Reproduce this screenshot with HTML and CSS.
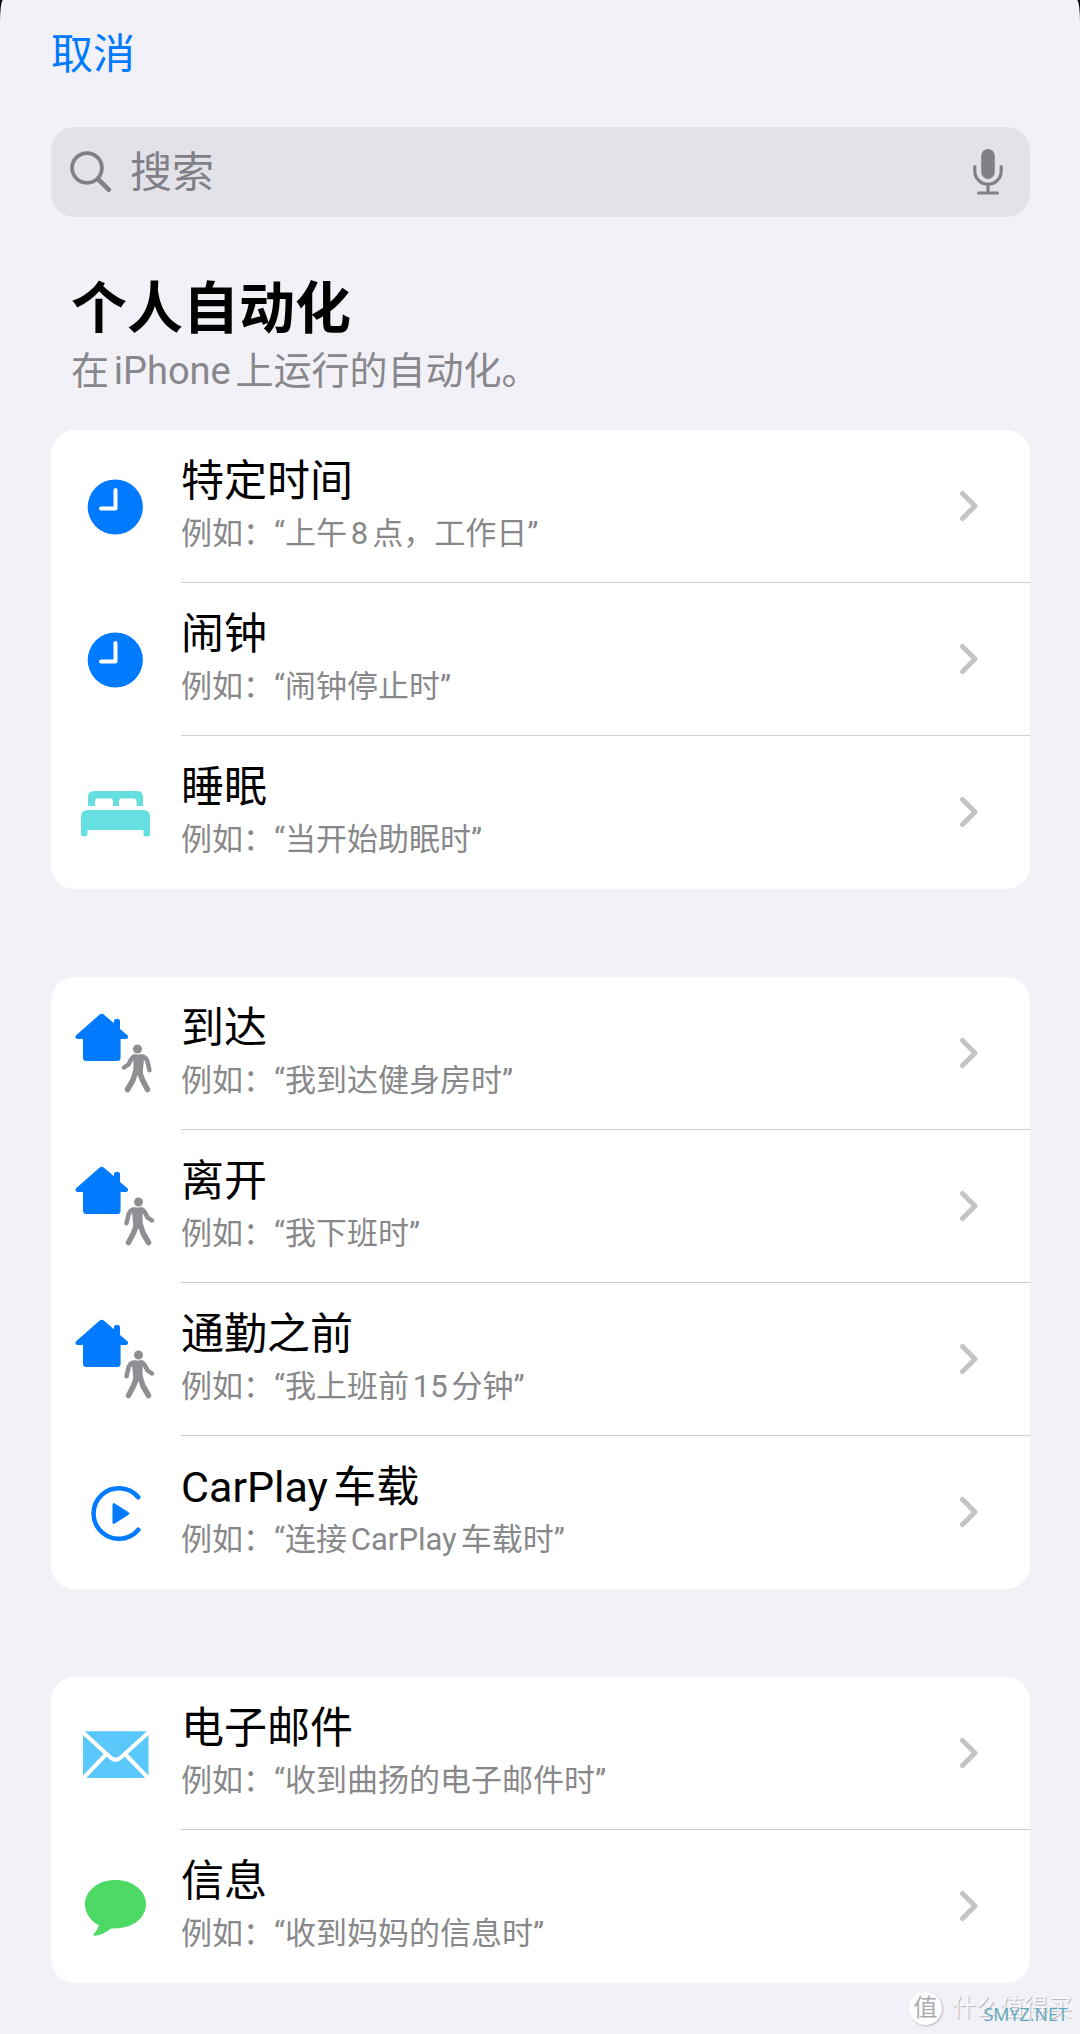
FILE: index.html
```html
<!DOCTYPE html>
<html lang="zh-CN">
<head>
<meta charset="utf-8">
<meta name="viewport" content="width=device-width, initial-scale=1">
<title>个人自动化</title>
<link rel="stylesheet" href="styles.css">
</head>
<body>
<svg class="defs" aria-hidden="true">
  <symbol id="clock" viewBox="0 0 130 121">
    <circle cx="64.300" cy="61" r="27.600" fill="#007aff"/>
    <path d="M64.500 44v18.500H50" fill="none" stroke="#fff" stroke-width="4" stroke-linecap="round" stroke-linejoin="round"/>
  </symbol>
  <symbol id="house" viewBox="0 0 130 121">
    <path fill="#007aff" d="M49 21.300q1.700-1.200 3.400 0L63 30.200V28q0-2 2-2h2q2 0 2 2v8l7.200 6q1.600 1.600.600 3-.700 1-2.200 1h-5v18.500q0 3.500-3.500 3.500H35.500q-3.500 0-3.500-3.500V46h-5q-1.600 0-2.300-1-.900-1.500.700-3z"/>
  </symbol>
  <symbol id="walker" viewBox="0 0 130 121">
    <g fill="#8e8e93" stroke="#8e8e93" stroke-linecap="round" stroke-linejoin="round">
      <circle cx="86.500" cy="56" r="4.500" stroke="none"/>
      <path d="M83 62.500h7q2 1 2 3.500l-1 10.500-.500 5h-7.500l.500-9z" stroke-width="2"/>
      <path d="M84 63.500q-2.500 0-4.500 4l-2 4-4.500 3M90.500 63.500q4 0 5.800 4.500l2.200 9.300" fill="none" stroke-width="4.500"/>
      <path d="M84.500 79l-2.500 8-5.500 9.500M88.500 79l3 8 5 9.500" fill="none" stroke-width="5.500"/>
    </g>
  </symbol>
  <symbol id="chevron" viewBox="0 0 20 32">
    <path d="M3.500 3.500L16 16 3.500 28.500" fill="none" stroke="#c4c4c6" stroke-width="5" stroke-linecap="round" stroke-linejoin="round"/>
  </symbol>
</svg>

<div class="sheet">
  <header class="bar"><button class="cancel" type="button">取消</button></header>

  <form class="search" role="search">
    <label for="q"><svg class="lens" viewBox="0 0 44 44" role="img" aria-label="搜索"><circle cx="17.800" cy="17.800" r="15.600"/><path class="handle" d="M29.500 29.500L40.500 40.500"/></svg></label>
    <input id="q" type="search" placeholder="搜索">
    <button class="mic" type="button" aria-label="听写">
      <svg viewBox="0 0 32 48"><rect x="9.200" y="1" width="13.600" height="30" rx="6.800" fill="#818086"/><path d="M2.800 18.500v4.500a13.200 13.200 0 0 0 26.400 0v-4.500M16 36v8.500M6.500 45h19" fill="none" stroke="#818086" stroke-width="3.200" stroke-linecap="round"/></svg>
    </button>
  </form>

  <main>
    <h1>个人自动化</h1>
    <p class="lead">在iPhone上运行的自动化。</p>

    <ul class="card">
      <li><a class="row" href="#time">
        <svg class="icon" aria-hidden="true"><use href="#clock"/></svg>
        <span class="body"><span class="text"><span class="title">特定时间</span><span class="hint">例如：“上午8点，工作日”</span></span><svg class="chevron" aria-hidden="true"><use href="#chevron"/></svg></span>
      </a></li>
      <li><a class="row" href="#alarm">
        <svg class="icon" aria-hidden="true"><use href="#clock"/></svg>
        <span class="body"><span class="text"><span class="title">闹钟</span><span class="hint">例如：“闹钟停止时”</span></span><svg class="chevron" aria-hidden="true"><use href="#chevron"/></svg></span>
      </a></li>
      <li><a class="row" href="#sleep">
        <svg class="icon" viewBox="0 0 130 121" aria-hidden="true">
          <g fill="#66dfe0">
            <path d="M37 54V45q0-6 6-6h43q6 0 6 6v9h-6.500v-4.500q0-3-3-3H71q-3 0-3 3V54h-6v-4.500q0-3-3-3H47q-3 0-3 3V54z"/>
            <path d="M30 82V65q0-7 7-7h55q7 0 7 7v17q0 2.500-2.500 2.500h-1.500q-2.500 0-2.500-2.500v-4h-56v4q0 2.500-2.500 2.500h-1.500Q30 84.500 30 82z"/>
          </g>
        </svg>
        <span class="body"><span class="text"><span class="title">睡眠</span><span class="hint">例如：“当开始助眠时”</span></span><svg class="chevron" aria-hidden="true"><use href="#chevron"/></svg></span>
      </a></li>
    </ul>

    <ul class="card">
      <li><a class="row" href="#arrive">
        <svg class="icon" viewBox="0 0 130 121" aria-hidden="true"><use href="#house"/><use href="#walker"/></svg>
        <span class="body"><span class="text"><span class="title">到达</span><span class="hint">例如：“我到达健身房时”</span></span><svg class="chevron" aria-hidden="true"><use href="#chevron"/></svg></span>
      </a></li>
      <li><a class="row" href="#leave">
        <svg class="icon" viewBox="0 0 130 121" aria-hidden="true"><use href="#house"/><g transform="translate(174 0) scale(-1 1)"><use href="#walker"/></g></svg>
        <span class="body"><span class="text"><span class="title">离开</span><span class="hint">例如：“我下班时”</span></span><svg class="chevron" aria-hidden="true"><use href="#chevron"/></svg></span>
      </a></li>
      <li><a class="row" href="#commute">
        <svg class="icon" viewBox="0 0 130 121" aria-hidden="true"><use href="#house"/><g transform="translate(174 0) scale(-1 1)"><use href="#walker"/></g></svg>
        <span class="body"><span class="text"><span class="title">通勤之前</span><span class="hint">例如：“我上班前15分钟”</span></span><svg class="chevron" aria-hidden="true"><use href="#chevron"/></svg></span>
      </a></li>
      <li><a class="row" href="#carplay">
        <svg class="icon" viewBox="0 0 130 121" aria-hidden="true">
          <path d="M87.300 45.300a25.300 25.300 0 1 0 0 32.400" fill="none" stroke="#007aff" stroke-width="4.500" stroke-linecap="round"/>
          <path d="M62 52.500v18q0 1.500 1.300.800l14.200-9q1-.800 0-1.600l-14.200-9q-1.300-.700-1.300.800z" fill="#007aff" stroke="#007aff"/>
        </svg>
        <span class="body"><span class="text"><span class="title">CarPlay车载</span><span class="hint">例如：“连接CarPlay车载时”</span></span><svg class="chevron" aria-hidden="true"><use href="#chevron"/></svg></span>
      </a></li>
    </ul>

    <ul class="card">
      <li><a class="row" href="#mail">
        <svg class="icon" viewBox="0 0 130 121" aria-hidden="true">
          <rect x="32" y="38.300" width="65.500" height="46.700" rx="3" fill="#5ac8fa"/>
          <path d="M31 38.500L59.500 64.500q5.200 4.600 10.400 0L98.500 38.500M31 86.500L55 61.500M98.500 86.500L74.500 61.500" fill="none" stroke="#fff" stroke-width="4"/>
        </svg>
        <span class="body"><span class="text"><span class="title">电子邮件</span><span class="hint">例如：“收到曲扬的电子邮件时”</span></span><svg class="chevron" aria-hidden="true"><use href="#chevron"/></svg></span>
      </a></li>
      <li><a class="row" href="#message">
        <svg class="icon" viewBox="0 0 130 121" aria-hidden="true">
          <path d="M64.500 34C81.500 34 95 44.500 95 58.300S81.500 82.300 64.500 82.300L60 82.500C54 87 49 89.500 44 89.700Q41.500 89.500 43 87.500 46.500 84 48 79.200C39.500 75 34 67.500 34 58.300 34 44.500 47.500 34 64.500 34z" fill="#4cd964"/>
        </svg>
        <span class="body"><span class="text"><span class="title">信息</span><span class="hint">例如：“收到妈妈的信息时”</span></span><svg class="chevron" aria-hidden="true"><use href="#chevron"/></svg></span>
      </a></li>
    </ul>
  </main>

  <div class="mark"><span class="seal">值</span><span class="mark-name">什么值得买</span><span class="mark-site">SMYZ.NET</span></div>
</div>
</body>
</html>
```

FILE: styles.css
```css
* { box-sizing: border-box; }

body {
  margin: 0;
  background: #000;
  color: #000;
  font-family: Roboto, "Noto Sans CJK SC", sans-serif;
  text-autospace: normal;
}

button, input { font: inherit; border: 0; padding: 0; background: none; }

.defs { position: absolute; width: 0; height: 0; }

.sheet {
  position: relative;
  min-height: 100vh;
  padding: 25px 50px 50px 51px;
  background: #f2f1f7;
  border-radius: 3px 3px 0 0 / 22px 22px 0 0;
}

.bar { display: flex; }

.cancel {
  font-size: 42px;
  line-height: 60px;
  color: #007aff;
}

.search {
  display: flex;
  align-items: center;
  height: 90px;
  margin-top: 42px;
  padding: 0 26px 0 19px;
  border-radius: 24px;
  background: #e3e2e8;
}

.lens {
  display: block;
  width: 42px;
  height: 42px;
  fill: none;
  stroke: #818086;
  stroke-width: 4;
  stroke-linecap: round;
}

.handle { stroke-width: 5; }

.search input {
  flex: 1;
  min-width: 0;
  height: 60px;
  margin-left: 18px;
  font-size: 42px;
  outline: none;
}

.search input::placeholder { color: #818086; opacity: 1; }

.mic { width: 32px; height: 48px; }
.mic svg { display: block; width: 32px; height: 48px; }

h1 {
  margin: 56px 20px 0;
  font-size: 56px;
  font-weight: 700;
  line-height: 72px;
}

.lead {
  margin: 0 20px 32px;
  font-size: 38px;
  line-height: 53px;
  color: #88878c;
}

.card {
  list-style: none;
  margin: 0 0 88px;
  padding: 0;
  border-radius: 24px;
  background: #fff;
}

.card:last-child { margin-bottom: 0; }

.row {
  display: flex;
  align-items: center;
  color: inherit;
  text-decoration: none;
}

.icon { flex: none; width: 130px; height: 121px; }

.body {
  flex: 1;
  display: flex;
  align-items: center;
  justify-content: space-between;
  height: 153px;
  padding-right: 51px;
  border-bottom: 1px solid #d0d0d3;
}

li:last-child .body { border-bottom-color: transparent; }

.text { display: flex; flex-direction: column; }
.title { font-size: 43px; line-height: 56px; }
.hint { font-size: 31px; line-height: 50px; color: #88888a; }

.chevron { width: 20px; height: 32px; }

.mark {
  position: absolute;
  right: 8px;
  bottom: 8px;
  display: flex;
  align-items: center;
  gap: 10px;
}

.seal {
  width: 33px;
  height: 33px;
  border-radius: 50%;
  background: #fff;
  box-shadow: 1px 1px 2px #b8b8be;
  color: #aaaaae;
  font-size: 24px;
  line-height: 33px;
  text-align: center;
}

.mark-name {
  color: #f8f8fc;
  font-size: 24px;
  line-height: 36px;
  text-shadow: 1px 1px 1px #b4b4ba;
}

.mark-site {
  position: absolute;
  right: 4px;
  bottom: 0;
  color: #5fa9bb;
  font-family: "Open Sans", sans-serif;
  font-size: 18px;
  line-height: 24px;
}
```
